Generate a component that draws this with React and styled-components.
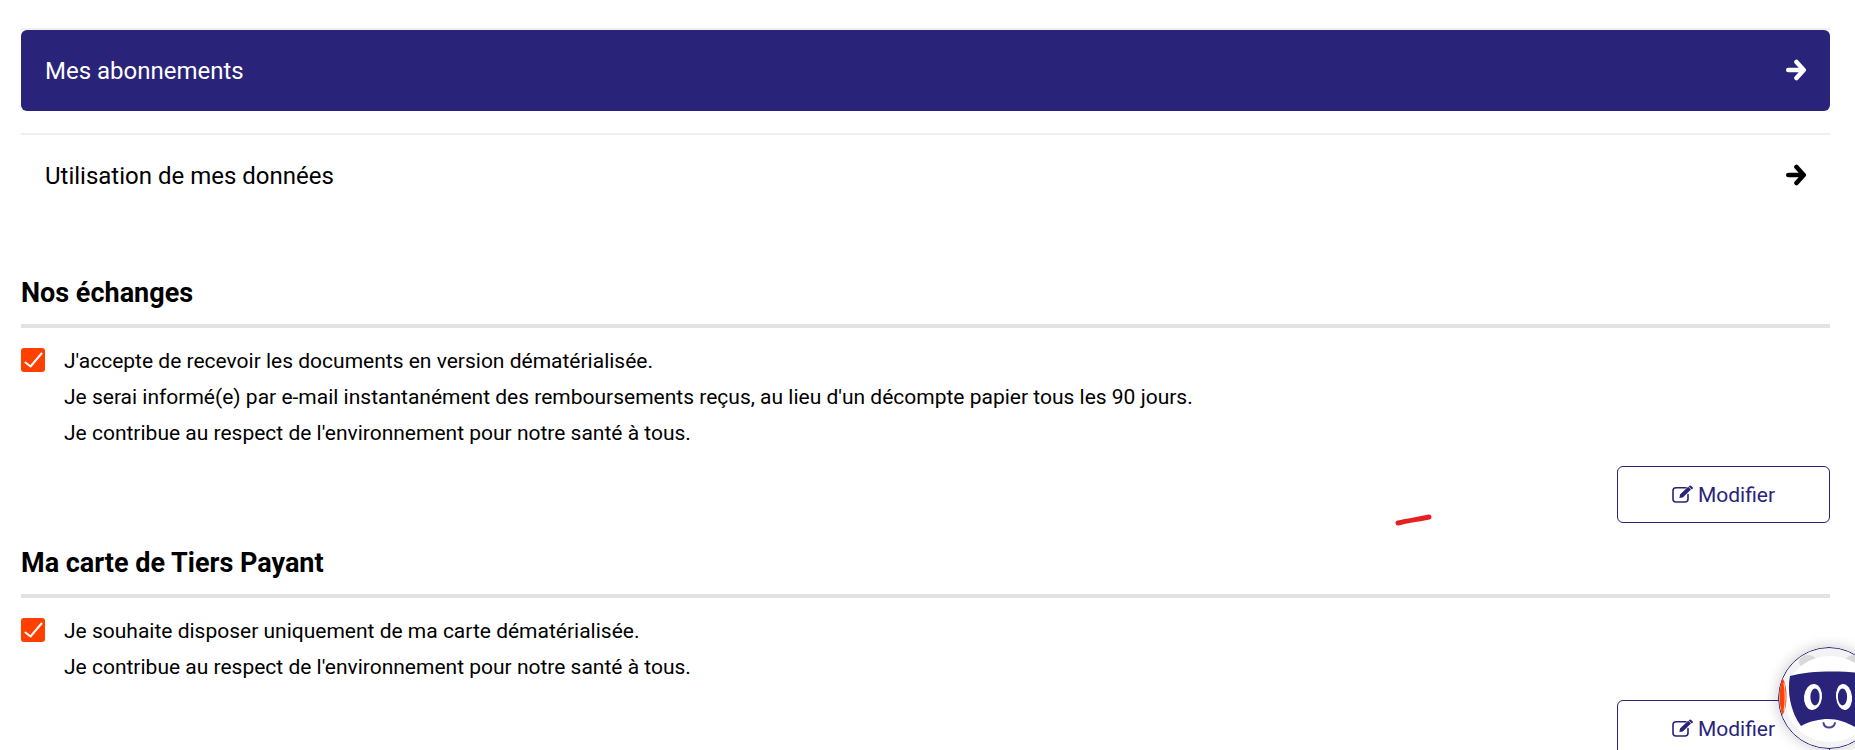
import React from "react";
import styled, { createGlobalStyle } from "styled-components";

const GlobalStyle = createGlobalStyle`
  html, body {
    margin: 0;
    height: 750px;
    overflow: hidden;
    background: #fff;
  }
  body {
    font-family: Roboto, "Liberation Sans", sans-serif;
    color: #000;
  }
`;

const Page = styled.main`
  padding: 28px 25px 0 21px;
`;

const NavRow = styled.a`
  display: flex;
  align-items: center;
  justify-content: space-between;
  height: 81px;
  padding: 0 24px;
  border-radius: ${(p) => (p.$active ? "6px" : "0")};
  background: ${(p) => (p.$active ? "#29247a" : "transparent")};
  color: ${(p) => (p.$active ? "#fff" : "#000")};
  font-size: 24px;
  svg {
    margin-top: -2px;
  }
`;

const NavItem = styled.div`
  border-top: 2px solid #efefef;
  margin-bottom: 22px;
  &:last-of-type {
    margin-bottom: 0;
  }
`;

const Section = styled.section`
  margin-top: ${(p) => p.$top};
`;

const Title = styled.h2`
  margin: 0;
  padding-bottom: 13px;
  border-bottom: 4px solid #e2e2e2;
  font-size: 27px;
  font-weight: 700;
  line-height: 35px;
`;

const Consent = styled.div`
  display: flex;
  gap: 19px;
  margin-top: 20px;
`;

const Box = styled.span`
  display: flex;
  flex: none;
  width: 24px;
  height: 24px;
  border-radius: 3px;
  background: #ff4000;
`;

const Lines = styled.div`
  font-size: 21px;
  line-height: 36px;
  margin-top: -5px;
`;

const Actions = styled.div`
  display: flex;
  justify-content: flex-end;
  margin-top: 15px;
`;

const EditButton = styled.button`
  display: flex;
  align-items: center;
  justify-content: center;
  gap: 4px;
  width: 213px;
  height: 57px;
  border: 1px solid #29247a;
  border-radius: 6px;
  background: #fff;
  color: #29247a;
  font-family: inherit;
  font-size: 21px;
  svg {
    margin-top: -1px;
  }
`;

const Scribble = styled.svg`
  position: fixed;
  left: 1395px;
  top: 512px;
`;

const Bot = styled.svg`
  position: fixed;
  left: 1778px;
  top: 647px;
  border-radius: 50%;
  box-shadow: 0 0 14px rgba(0, 0, 0, 0.22);
`;

const Arrow = () => (
  <svg width="20" height="22" viewBox="0 0 20 22" fill="none" stroke="currentColor" strokeWidth="4.6" strokeLinecap="round" strokeLinejoin="round">
    <path d="M2.3 11 H17" />
    <path d="M10.5 3 L17.7 11 L10.5 19" />
  </svg>
);

const EditIcon = () => (
  <svg width="22" height="18" viewBox="0 0 22 18" fill="none">
    <path d="M14 2.8 H4 Q1 2.8 1 5.8 V14 Q1 17 4 17 H13 Q16 17 16 14 V9.5" stroke="currentColor" strokeWidth="1.6" strokeLinecap="round" />
    <path d="M8 9.5 L16.2 1.8 L19 4.6 L10.8 12.4 L7.4 13 Z M17.2 1 Q18.2 0 19.2 1 L20.6 2.3 Q21.4 3.2 20.4 4 L19.8 4.4 L16.7 1.4 Z" fill="currentColor" />
  </svg>
);

const Check = () => (
  <svg width="24" height="24" viewBox="0 0 24 24" fill="none">
    <path d="M4.5 14.5 L9.5 18.5 L20.5 5.5" stroke="#fff" strokeWidth="2" strokeLinecap="round" strokeLinejoin="round" />
  </svg>
);

const Robot = () => (
  <Bot width="102" height="102" viewBox="0 0 102 102">
    <circle cx="51" cy="51" r="50.5" fill="#f3f3f3" stroke="#29247a" />
    <ellipse cx="30" cy="15" rx="9" ry="7" fill="#d9d9d9" />
    <ellipse cx="76" cy="15" rx="9" ry="7" fill="#d9d9d9" />
    <ellipse cx="52" cy="52" rx="45" ry="43" fill="#fff" />
    <path d="M1.5 49 C1.5 43 3 36 4.5 31 C7.5 36 8.5 42 8.5 50 C8.5 57 7.5 63 4.5 68 C2.5 63 1.5 56 1.5 49 Z" fill="#ff4000" />
    <path d="M6 36 C7.5 44 7.5 56 6 64" fill="none" stroke="#fff" strokeWidth="0.8" />
    <path d="M12 29 C9 44 12 64 23 79 C32 74 42 72 50 72 C60 72 68 75 77 80 L102 72 L102 29 C80 24 36 22 12 29 Z" fill="#29247a" />
    <ellipse cx="35" cy="50" rx="9" ry="13" fill="#fff" transform="rotate(6 35 50)" />
    <ellipse cx="37" cy="50" rx="4.6" ry="8.5" fill="#29247a" />
    <ellipse cx="66" cy="50" rx="8" ry="13" fill="#fff" transform="rotate(-6 66 50)" />
    <ellipse cx="64.5" cy="50" rx="4.6" ry="8.5" fill="#29247a" />
    <path d="M45.5 76 C46.5 82 55.5 82 57 76" fill="none" stroke="#4c4792" strokeWidth="2" strokeLinecap="round" />
  </Bot>
);

const App = () => (
  <>
    <GlobalStyle />
    <Page>
      <NavItem>
        <NavRow $active>
          Mes abonnements
          <Arrow />
        </NavRow>
      </NavItem>
      <NavItem>
        <NavRow>
          Utilisation de mes données
          <Arrow />
        </NavRow>
      </NavItem>

      <Section $top="60px">
        <Title>Nos échanges</Title>
        <Consent>
          <Box><Check /></Box>
          <Lines>
            J'accepte de recevoir les documents en version dématérialisée.
            <br />
            Je serai informé(e) par e-mail instantanément des remboursements reçus, au lieu d'un décompte papier tous les 90 jours.
            <br />
            Je contribue au respect de l'environnement pour notre santé à tous.
          </Lines>
        </Consent>
        <Actions>
          <EditButton><EditIcon />Modifier</EditButton>
        </Actions>
      </Section>

      <Section $top="23px">
        <Title>Ma carte de Tiers Payant</Title>
        <Consent>
          <Box><Check /></Box>
          <Lines>
            Je souhaite disposer uniquement de ma carte dématérialisée.
            <br />
            Je contribue au respect de l'environnement pour notre santé à tous.
          </Lines>
        </Consent>
        <Actions>
          <EditButton><EditIcon />Modifier</EditButton>
        </Actions>
      </Section>
    </Page>

    <Scribble width="38" height="14" viewBox="0 0 38 14">
      <path d="M3 11 C12 9 24 7 34 5" stroke="#e42020" strokeWidth="5" strokeLinecap="round" fill="none" />
    </Scribble>
    <Robot />
  </>
);

export default App;
